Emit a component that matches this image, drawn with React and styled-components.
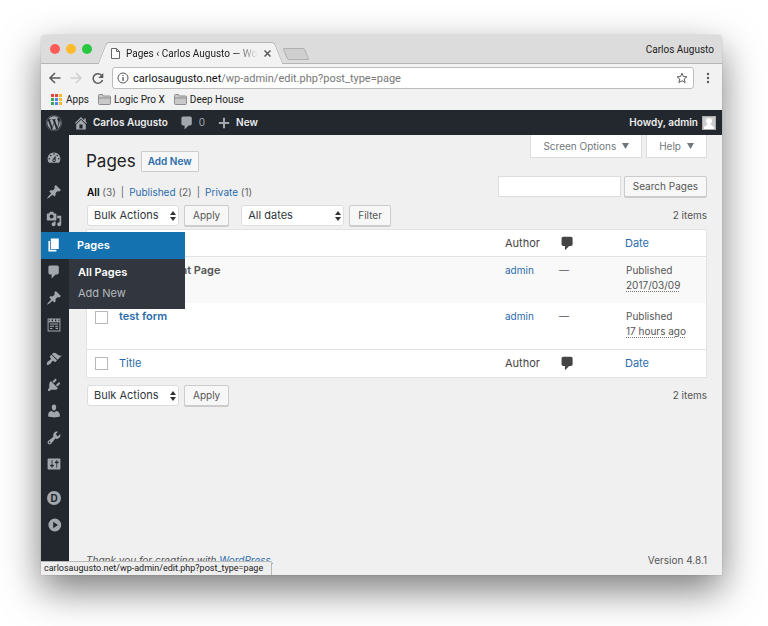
import React, { useState } from 'react';
import styled, { createGlobalStyle, css } from 'styled-components';
import { FaWordpress } from 'react-icons/fa';

const colors = {
  chrome: '#f2f2f2',
  admin: '#23282f',
  submenu: '#32373f',
  blue: '#1472b1',
  link: '#2a6cab',
  icon: '#a2a7ad',
  text: '#444',
  body: '#f0f0f0',
  line: '#e2e2e2',
};

const chromeFont = "Roboto, 'Liberation Sans', sans-serif";

const GlobalStyle = createGlobalStyle`
  * {
    box-sizing: border-box;
  }

  body {
    margin: 0;
    background: #fff;
    color: ${colors.text};
    font: 11px/15px Inter, 'Liberation Sans', sans-serif;
  }

  button, input, select {
    font: inherit;
    color: inherit;
    margin: 0;
  }

  a {
    color: ${colors.link};
    text-decoration: none;
  }
`;

const Desktop = styled.div`
  min-height: 100vh;
  display: flex;
  padding: 35px 46px 51px 41px;
`;

const Shadow = styled.div`
  flex: 1;
  min-width: 0;
  display: flex;
  border-radius: 4px 4px 0 0;
  box-shadow: 0 0 1px rgba(0, 0, 0, 0.4), 0 15px 38px rgba(0, 0, 0, 0.52);
`;

const Window = styled.div`
  position: relative;
  flex: 1;
  min-width: 0;
  display: flex;
  flex-direction: column;
  overflow: hidden;
  border-radius: 4px 4px 0 0;
  background: ${colors.body};
`;

/* Browser chrome */

const TabBar = styled.div`
  height: 29px;
  display: flex;
  align-items: flex-end;
  padding: 0 8px 0 9px;
  background: #dcdcdc;
  border-bottom: 1px solid #b5b5b5;
  font-family: ${chromeFont};
  font-size: 10px;
  color: #222;
`;

const Lights = styled.div`
  display: flex;
  gap: 6px;
  align-self: center;
  margin-right: 10px;
`;

const Light = styled.button`
  width: 10px;
  height: 10px;
  padding: 0;
  border: 0;
  border-radius: 50%;
  background: ${props => props.$color};
`;

const Tab = styled.div`
  position: relative;
  z-index: 1;
  width: 177px;
  height: 22px;
  margin-bottom: -1px;
  display: flex;
  align-items: center;
  gap: 6px;
  padding: 0 8px 0 9px;

  &::before,
  &::after {
    content: '';
    position: absolute;
    z-index: -1;
    top: 0;
    bottom: 0;
    background: ${colors.chrome};
    border-top: 1px solid #b5b5b5;
  }

  &::before {
    left: 0;
    right: 50%;
    border-left: 1px solid #b5b5b5;
    border-top-left-radius: 3px;
    transform: skewX(-22deg);
  }

  &::after {
    left: 45%;
    right: 0;
    border-right: 1px solid #b5b5b5;
    border-top-right-radius: 3px;
    transform: skewX(22deg);
  }
`;

const TabTitle = styled.span`
  flex: 1;
  overflow: hidden;
  white-space: nowrap;
  mask-image: linear-gradient(to right, #000 82%, transparent 100%);
`;

const IconButton = styled.button`
  display: flex;
  align-items: center;
  justify-content: center;
  padding: 0;
  border: 0;
  background: none;
  color: ${props => props.$color || '#5a5a5a'};
`;

const NewTab = styled.button`
  width: 22px;
  height: 12px;
  margin: 0 0 3px 6px;
  padding: 0;
  border: 1px solid #b0b0b0;
  border-radius: 2px;
  background: #cfcfcf;
  transform: skewX(22deg);
`;

const Profile = styled.span`
  margin-left: auto;
  align-self: center;
`;

const Toolbar = styled.div`
  display: flex;
  align-items: center;
  padding: 3px 8px 1px 7px;
  background: ${colors.chrome};
  font-family: ${chromeFont};
`;

const NavButtons = styled.div`
  display: flex;
  gap: 7px;
  margin-right: 7px;
`;

const AddressBar = styled.div`
  flex: 1;
  height: 22px;
  display: flex;
  align-items: center;
  gap: 4px;
  padding: 0 5px 0 4px;
  margin-right: 8px;
  background: #fff;
  border: 1px solid #bdbdbd;
  border-radius: 3px;
  color: #555;
`;

const Url = styled.div`
  flex: 1;
  color: #777;

  strong {
    font-weight: 400;
    color: #111;
  }
`;

const Bookmarks = styled.nav`
  height: 20px;
  display: flex;
  align-items: center;
  gap: 9px;
  padding: 0 10px 1px;
  background: ${colors.chrome};
  font-family: ${chromeFont};
  font-size: 10px;

  a {
    display: flex;
    align-items: center;
    gap: 3px;
    color: #222;
  }
`;

/* WordPress */

const AdminBar = styled.header`
  height: 25px;
  display: flex;
  align-items: center;
  justify-content: space-between;
  padding: 0 6px 0 5px;
  background: ${colors.admin};
  font-size: 10px;
  font-weight: 600;
`;

const BarGroup = styled.div`
  display: flex;
  align-items: center;
  gap: 11px;
`;

const BarLink = styled.a`
  display: flex;
  align-items: center;
  gap: 4px;
  color: #eee;
`;

const BarIcon = styled.span`
  display: flex;
  color: ${colors.icon};
`;

const Muted = styled.span`
  font-weight: 400;
  color: ${colors.icon};
`;

const Avatar = styled.svg`
  background: #ccc;
  border: 1px solid #aaa;
`;

const Main = styled.div`
  flex: 1;
  display: flex;
`;

const Sidebar = styled.nav`
  width: 28px;
  flex: none;
  display: flex;
  flex-direction: column;
  gap: 8px;
  padding: 10px 0 30px;
  background: ${colors.admin};
`;

const MenuGroup = styled.ul`
  list-style: none;
  margin: 0;
  padding: 0;
  display: grid;
  grid-auto-rows: 1fr;
  height: ${props => props.$height}px;
`;

const MenuItem = styled.li`
  position: relative;
  display: flex;
`;

const MenuLink = styled.a`
  flex: none;
  width: 28px;
  display: flex;
  align-items: center;
  padding-left: 5px;
  color: ${colors.icon};

  ${props =>
    props.$open &&
    css`
      position: relative;
      z-index: 3;
      width: 144px;
      gap: 15px;
      background: ${colors.blue};
      color: #fff;
      font-weight: 600;
    `}
`;

const Submenu = styled.ul`
  position: absolute;
  z-index: 3;
  top: 100%;
  left: 28px;
  width: 116px;
  list-style: none;
  margin: 0;
  padding: 3px 0 5px;
  background: ${colors.submenu};

  a {
    display: block;
    padding: 3px 9px;
    color: #b4b9be;
  }

  a[aria-current] {
    color: #fff;
    font-weight: 600;
  }
`;

const LetterBadge = styled.span`
  width: 14px;
  height: 14px;
  margin: 0 1px;
  display: flex;
  align-items: center;
  justify-content: center;
  border-radius: 50%;
  background: ${colors.icon};
  color: ${colors.admin};
  font-size: 10px;
  font-weight: 700;
`;

const Content = styled.main`
  flex: 1;
  min-width: 0;
  display: flex;
  flex-direction: column;
  padding: 0 15px 7px 17px;
`;

const TopRow = styled.div`
  display: flex;
  align-items: flex-start;
  justify-content: space-between;
`;

const Heading = styled.div`
  display: flex;
  align-items: center;
  gap: 5px;
  padding-top: 16px;
`;

const Title = styled.h1`
  margin: 0;
  font-size: 17px;
  line-height: 21px;
  font-weight: 400;
  color: #222;
`;

const AddNew = styled.a`
  padding: 2px 6px;
  border: 1px solid #ccc;
  border-radius: 1px;
  background: #f7f7f7;
  font-weight: 600;
  font-size: 10px;
`;

const ScreenMeta = styled.div`
  display: flex;
  gap: 4px;
`;

const MetaButton = styled.button`
  height: 23px;
  display: flex;
  align-items: center;
  gap: 6px;
  padding: 0 12px;
  border: 1px solid #ddd;
  border-top: 0;
  background: #fff;
  color: #72777c;
  font-size: 10px;
`;

const FilterRow = styled.div`
  display: flex;
  align-items: flex-start;
  justify-content: space-between;
  padding-top: 4px;
`;

const Views = styled.ul`
  list-style: none;
  display: flex;
  gap: 5px;
  margin: 0;
  padding: 9px 0 0 1px;
  font-size: 10px;
  color: #666;

  li + li::before {
    content: '|';
    margin-right: 5px;
  }

  a[aria-current] {
    color: #000;
    font-weight: 600;
  }
`;

const SearchForm = styled.form`
  display: flex;
  gap: 3px;
`;

const SearchInput = styled.input`
  width: 123px;
  height: 21px;
  padding: 0 6px;
  border: 1px solid #ddd;
  background: #fff;
`;

const Button = styled.button`
  height: 21px;
  padding: 0 8px;
  border: 1px solid #ccc;
  border-radius: 2px;
  background: #f7f7f7;
  box-shadow: 0 1px 0 #ccc;
  color: #555;
  font-size: 10px;
  white-space: nowrap;
`;

const TableNav = styled.div`
  display: flex;
  align-items: center;
  gap: 12px;
  padding: ${props => props.$padding};
`;

const Actions = styled.div`
  display: flex;
  gap: 5px;
`;

const SelectBox = styled.span`
  position: relative;
  width: ${props => props.$width}px;

  select {
    display: block;
    width: 100%;
    height: 21px;
    padding: 0 6px;
    appearance: none;
    border: 1px solid #ddd;
    border-radius: 3px;
    background: #fff;
    color: #32373c;
  }

  svg {
    position: absolute;
    right: 3px;
    top: 6px;
    pointer-events: none;
  }
`;

const Count = styled.span`
  margin-left: auto;
  color: #555;
  font-size: 10px;
`;

const Table = styled.table`
  width: 100%;
  table-layout: fixed;
  border-collapse: separate;
  border-spacing: 0;
  border: 1px solid ${colors.line};
  background: #fff;

  th,
  td {
    padding: 0;
    text-align: left;
    vertical-align: top;
    font-weight: 400;
  }

  thead th,
  thead td {
    height: 27px;
    vertical-align: middle;
    border-bottom: 1px solid ${colors.line};
  }

  tfoot th,
  tfoot td {
    height: 28px;
    vertical-align: middle;
    border-top: 1px solid ${colors.line};
  }

  tbody td,
  tbody th {
    height: 46px;
    padding-top: 6px;
    color: #555;
  }

  tbody tr:nth-child(odd) {
    background: #f9f9f9;
  }

  input {
    display: block;
    appearance: none;
    width: 13px;
    height: 13px;
    margin-left: 8px;
    border: 1px solid #b4b9be;
    background: #fff;
  }

  tbody input {
    margin-top: 2px;
  }

  svg {
    display: block;
  }

  strong {
    font-weight: 600;
  }

  abbr {
    text-decoration: underline dotted #777;
    text-underline-offset: 2px;
  }
`;

const SmallCell = styled.td`
  font-size: 10px;
`;

const DateCell = styled(SmallCell)`
  && {
    padding-left: 1px;
  }
`;

const Footer = styled.footer`
  display: flex;
  justify-content: space-between;
  margin-top: auto;
  color: #555;
  font-size: 10px;

  a {
    text-decoration: underline;
    text-underline-offset: 2px;
  }
`;

const StatusBar = styled.div`
  position: absolute;
  z-index: 4;
  left: 0;
  bottom: 0;
  height: 14px;
  padding: 0 8px 0 3px;
  border: solid #b8b8b8;
  border-width: 1px 1px 0 0;
  border-top-right-radius: 2px;
  background: #eee;
  color: #222;
  font-family: ${chromeFont};
  font-size: 9px;
  line-height: 13px;
`;

const icons = {
  dashboard:
    'M3.76 16h12.48c1.1-1.37 1.76-3.11 1.76-5 0-4.42-3.58-8-8-8s-8 3.58-8 8c0 1.89.66 3.63 1.76 5zM10 4c.55 0 1 .45 1 1s-.45 1-1 1-1-.45-1-1 .45-1 1-1zM6 6c.55 0 1 .45 1 1s-.45 1-1 1-1-.45-1-1 .45-1 1-1zm8 0c.55 0 1 .45 1 1s-.45 1-1 1-1-.45-1-1 .45-1 1-1zm-5.37 5.55L12 7v6c0 1.1-.9 2-2 2s-2-.9-2-2c0-.57.24-1.08.63-1.45zM4 10c.55 0 1 .45 1 1s-.45 1-1 1-1-.45-1-1 .45-1 1-1zm12 0c.55 0 1 .45 1 1s-.45 1-1 1-1-.45-1-1 .45-1 1-1zm-5 3c0-.55-.45-1-1-1s-1 .45-1 1 .45 1 1 1 1-.45 1-1z',
  pin: 'M10.44 3.02l1.82-1.82 6.36 6.35-1.83 1.82c-1.05-.68-2.48-.57-3.41.36l-.75.75c-.92.93-1.04 2.35-.35 3.41l-1.83 1.82-2.41-2.41-2.8 2.79c-.42.42-3.38 2.71-3.8 2.29s1.86-3.39 2.28-3.81l2.79-2.79L4.1 9.36l1.83-1.82c1.05.69 2.48.57 3.4-.36l.75-.75c.93-.92 1.05-2.35.36-3.41z',
  media:
    'M13 11V4c0-.55-.45-1-1-1h-1.67L9 1H5L3.67 3H2c-.55 0-1 .45-1 1v7c0 .55.45 1 1 1h10c.55 0 1-.45 1-1zM7 4.5c1.38 0 2.5 1.12 2.5 2.5S8.38 9.5 7 9.5 4.5 8.38 4.5 7 5.62 4.5 7 4.5zM14 6h5v10.5c0 1.38-1.12 2.5-2.5 2.5S14 17.88 14 16.5s1.12-2.5 2.5-2.5c.17 0 .34.02.5.05V9h-3V6zm-4 8.05V13h2v3.5c0 1.38-1.12 2.5-2.5 2.5S7 17.88 7 16.5 8.12 14 9.5 14c.17 0 .34.02.5.05z',
  page: 'M6 15V2h10v13H6zm-1 1h8v2H3V5h2v11z',
  comment: 'M5 2h9c1.1 0 2 .9 2 2v7c0 1.1-.9 2-2 2h-2l-5 5v-5H5c-1.1 0-2-.9-2-2V4c0-1.1.9-2 2-2z',
  form: 'M2 2h16v16H2zM3.2 6.5v10.3h13.6V6.5zM3.2 3.2v2h1.3v-2zM7 3.2v2h1.8v-2zM11.2 3.2v2H13v-2zM15.5 3.2v2h1.3v-2zM5 8.2h10v1.2H5zM5 11h5v1.2H5zM11.5 11H15v1.2h-3.5zM5 13.8h3V15H5zM12 13.3h3V15h-3z',
  appearance:
    'M14.48 11.06L7.41 3.99l1.5-1.5c.5-.56 2.3-.47 3.51.32 1.21.8 1.43 1.28 2.91 2.1 1.18.64 2.45 1.26 4.45.85zm-.71.71L6.7 4.7 4.93 6.47c-.39.39-.39 1.02 0 1.41l1.06 1.06c.39.39.39 1.03 0 1.42-.6.6-1.43 1.11-2.21 1.69-.35.26-.7.53-1.01.84C1.43 14.23.4 16.08 1.4 17.07c.99 1 2.84-.03 4.18-1.36.31-.31.58-.66.85-1.02.57-.78 1.08-1.61 1.69-2.21.39-.39 1.02-.39 1.41 0l1.06 1.06c.39.39 1.02.39 1.41 0z',
  plugins:
    'M13.11 4.36L9.87 7.6 8 5.73l3.24-3.24c.35-.34 1.05-.2 1.56.32.52.51.66 1.21.31 1.55zm-8 1.77l.91-1.12 9.01 9.01-1.19.84c-.71.71-2.63 1.16-3.82 1.16H6.14L4.9 17.26c-.59.59-1.54.59-2.12 0-.59-.58-.59-1.53 0-2.12l1.24-1.24v-3.88c0-1.13.4-3.19 1.09-3.89zm7.26 3.97l3.24-3.24c.34-.35 1.04-.21 1.55.31.52.51.66 1.21.31 1.55l-3.24 3.25z',
  users:
    'M10 9.25c-2.27 0-2.73-3.44-2.73-3.44C7 4.02 7.82 2 9.97 2c2.16 0 2.98 2.02 2.71 3.81 0 0-.41 3.44-2.68 3.44zm0 2.57L12.72 10c2.39 0 4.52 2.33 4.52 4.53v2.49s-3.65 1.13-7.24 1.13c-3.65 0-7.24-1.13-7.24-1.13v-2.49c0-2.25 1.94-4.48 4.47-4.48z',
  tools:
    'M16.68 9.77c-1.34 1.34-3.3 1.67-4.95.99l-5.41 6.52c-.99.99-2.59.99-3.58 0s-.99-2.59 0-3.57l6.52-5.42c-.68-1.65-.35-3.61.99-4.95 1.28-1.28 3.12-1.62 4.72-1.06l-2.89 2.89 2.82 2.82 2.86-2.87c.53 1.58.18 3.39-1.08 4.65zM3.81 16.21c.4.39 1.04.39 1.43 0 .4-.4.4-1.04 0-1.43-.39-.4-1.03-.4-1.43 0-.39.39-.39 1.03 0 1.43z',
  settings:
    'M18 16V4c0-.55-.45-1-1-1H3c-.55 0-1 .45-1 1v12c0 .55.45 1 1 1h14c.55 0 1-.45 1-1zM8 11h1c.55 0 1 .45 1 1s-.45 1-1 1H8v1.5c0 .28-.22.5-.5.5s-.5-.22-.5-.5V13H6c-.55 0-1-.45-1-1s.45-1 1-1h1V5.5c0-.28.22-.5.5-.5s.5.22.5.5V11zm5-2h-1c-.55 0-1-.45-1-1s.45-1 1-1h1V5.5c0-.28.22-.5.5-.5s.5.22.5.5V7h1c.55 0 1 .45 1 1s-.45 1-1 1h-1v5.5c0 .28-.22.5-.5.5s-.5-.22-.5-.5V9z',
  play: 'M11 2a8 8 0 1 0 0 16 8 8 0 0 0 0-16zM9 6l6 4-6 4z',
  home: 'M16 8.5l1.53 1.53-1.06 1.06L10 4.6l-6.47 6.49-1.06-1.06L10 2.5l4 4v-2h2v4zm-6-2.46l6 5.99V18H4v-5.97zM12 17v-5H8v5h4z',
  plus: 'M8.7 3.5h2.6v5.2h5.2v2.6h-5.2v5.2H8.7v-5.2H3.5V8.7h5.2z',
};

const Icon = ({ name, size = 16 }) => (
  <svg width={size} height={size} viewBox="0 0 20 20" fill="currentColor" fillRule="evenodd" aria-hidden="true">
    <path d={icons[name]} />
  </svg>
);

const Caret = () => (
  <svg width="7" height="6" viewBox="0 0 7 6" fill="currentColor" aria-hidden="true">
    <path d="M0 0h7L3.5 6z" />
  </svg>
);

const Folder = () => (
  <svg width="13" height="11" viewBox="0 0 13 11" fill="#c9c9c9" stroke="#8d8d8d" aria-hidden="true">
    <path d="M.5 9.5v-8q0-1 1-1h3l1 1.5h6q1 0 1 1v6.5q0 1-1 1h-10q-1 0-1-1zM.5 4h12" />
  </svg>
);

const appColors = ['#e8453c', '#e8453c', '#f9bb2d', '#3aa757', '#4688f1', '#f9bb2d', '#3aa757', '#4688f1', '#f9bb2d'];

const AppsGrid = () => (
  <svg width="12" height="11" viewBox="0 0 12 11" aria-hidden="true">
    {appColors.map((color, i) => (
      <rect key={i} x={(i % 3) * 4} y={Math.floor(i / 3) * 4} width="3" height="3" fill={color} />
    ))}
  </svg>
);

const menuGroups = [
  { height: 26, items: [{ icon: 'dashboard', label: 'Dashboard' }] },
  {
    height: 159,
    items: [
      { icon: 'pin', label: 'Posts' },
      { icon: 'media', label: 'Media' },
      { icon: 'page', label: 'Pages', open: true },
      { icon: 'comment', label: 'Comments' },
      { icon: 'pin', label: 'Projects' },
      { icon: 'form', label: 'Forms' },
    ],
  },
  {
    height: 131,
    items: [
      { icon: 'appearance', label: 'Appearance' },
      { icon: 'plugins', label: 'Plugins' },
      { icon: 'users', label: 'Users' },
      { icon: 'tools', label: 'Tools' },
      { icon: 'settings', label: 'Settings' },
    ],
  },
  {
    height: 53,
    items: [
      { letter: 'D', label: 'Divi' },
      { icon: 'play', label: 'Collapse menu' },
    ],
  },
];

const pages = [
  { id: 1, title: 'Your Account Page', author: 'admin', date: '2017/03/09' },
  { id: 2, title: 'test form', author: 'admin', date: '17 hours ago', editable: true },
];

const bulkOptions = ['Bulk Actions', 'Edit', 'Move to Trash'];

const Select = ({ label, options, width }) => (
  <SelectBox $width={width}>
    <select aria-label={label}>
      {options.map(option => (
        <option key={option}>{option}</option>
      ))}
    </select>
    <svg width="6" height="10" viewBox="0 0 6 10" fill="#333" aria-hidden="true">
      <path d="M3 0l3 4H0zM3 10L0 6h6z" />
    </svg>
  </SelectBox>
);

const BulkActions = () => (
  <Actions>
    <Select label="Bulk actions" options={bulkOptions} width={92} />
    <Button>Apply</Button>
  </Actions>
);

const BrowserChrome = () => (
  <>
    <TabBar>
      <Lights>
        <Light $color="#fc5b57" aria-label="Close window" />
        <Light $color="#fdbc2e" aria-label="Minimize window" />
        <Light $color="#28c840" aria-label="Zoom window" />
      </Lights>
      <Tab>
        <svg width="9" height="11" viewBox="0 0 9 11" fill="#fff" stroke="#666" aria-hidden="true">
          <path d="M.5.5h5l3 3v7h-8zM5.5.5v3h3" />
        </svg>
        <TabTitle>Pages ‹ Carlos Augusto — WordPress</TabTitle>
        <IconButton aria-label="Close tab">
          <svg width="7" height="7" viewBox="0 0 7 7" stroke="currentColor" strokeWidth="1.5">
            <path d="M.5.5l6 6M6.5.5l-6 6" />
          </svg>
        </IconButton>
      </Tab>
      <NewTab aria-label="New tab" />
      <Profile>Carlos Augusto</Profile>
    </TabBar>
    <Toolbar>
      <NavButtons>
        <IconButton aria-label="Back">
          <svg width="14" height="12" viewBox="0 0 14 12" fill="none" stroke="currentColor" strokeWidth="1.5">
            <path d="M12.5 6h-10M7 1L2 6l5 5" />
          </svg>
        </IconButton>
        <IconButton aria-label="Forward" $color="#cfcfcf">
          <svg width="14" height="12" viewBox="0 0 14 12" fill="none" stroke="currentColor" strokeWidth="1.5">
            <path d="M1.5 6h10M7 1l5 5-5 5" />
          </svg>
        </IconButton>
        <IconButton aria-label="Reload">
          <svg width="15" height="13" viewBox="0 0 15 13" fill="none" stroke="currentColor" strokeWidth="1.5">
            <path d="M12.5 8A4.8 4.8 0 1 1 11.5 3.2" />
            <path d="M13.3 1v5h-5z" fill="currentColor" stroke="none" />
          </svg>
        </IconButton>
      </NavButtons>
      <AddressBar>
        <svg width="12" height="12" viewBox="0 0 12 12" fill="none" stroke="currentColor" aria-hidden="true">
          <circle cx="6" cy="6" r="5" />
          <path d="M6 5v4M6 3v1" strokeWidth="1.3" />
        </svg>
        <Url>
          <strong>carlosaugusto.net</strong>/wp-admin/edit.php?post_type=page
        </Url>
        <IconButton aria-label="Bookmark this page">
          <svg width="12" height="12" viewBox="0 0 12 12" fill="none" stroke="currentColor">
            <path d="M6 1.2l1.4 3.3 3.5.3-2.7 2.3.9 3.5L6 8.7l-3.1 1.9.9-3.5L1.1 4.8l3.5-.3z" />
          </svg>
        </IconButton>
      </AddressBar>
      <IconButton aria-label="Menu">
        <svg width="12" height="12" viewBox="0 0 12 12" fill="currentColor">
          <circle cx="6" cy="2" r="1.2" />
          <circle cx="6" cy="6" r="1.2" />
          <circle cx="6" cy="10" r="1.2" />
        </svg>
      </IconButton>
    </Toolbar>
    <Bookmarks>
      <a href="#apps"><AppsGrid />Apps</a>
      <a href="#logic"><Folder />Logic Pro X</a>
      <a href="#deep-house"><Folder />Deep House</a>
    </Bookmarks>
  </>
);

const Header = () => (
  <AdminBar>
    <BarGroup>
      <BarLink href="#wp" aria-label="About WordPress">
        <BarIcon><FaWordpress size={16} /></BarIcon>
      </BarLink>
      <BarLink href="#site">
        <BarIcon><Icon name="home" /></BarIcon>
        Carlos Augusto
      </BarLink>
      <BarLink href="#comments">
        <BarIcon><Icon name="comment" /></BarIcon>
        <Muted>0</Muted>
      </BarLink>
      <BarLink href="#new">
        <BarIcon><Icon name="plus" /></BarIcon>
        New
      </BarLink>
    </BarGroup>
    <BarLink href="#profile">
      Howdy, admin
      <Avatar width="14" height="14" viewBox="0 0 12 12" fill="#fff" aria-hidden="true">
        <circle cx="6" cy="4" r="3" />
        <path d="M1 12v-2q2-1 3.5-3h3q1.5 2 3.5 3v2z" />
      </Avatar>
    </BarLink>
  </AdminBar>
);

const AdminMenu = () => (
  <Sidebar aria-label="Main menu">
    {menuGroups.map(group => (
      <MenuGroup key={group.items[0].label} $height={group.height}>
        {group.items.map(item => (
          <MenuItem key={item.label}>
            <MenuLink href="#menu" aria-label={item.label} $open={item.open}>
              {item.letter ? <LetterBadge>{item.letter}</LetterBadge> : <Icon name={item.icon} />}
              {item.open && item.label}
            </MenuLink>
            {item.open && (
              <Submenu>
                <li><a href="#all" aria-current="page">All Pages</a></li>
                <li><a href="#new">Add New</a></li>
              </Submenu>
            )}
          </MenuItem>
        ))}
      </MenuGroup>
    ))}
  </Sidebar>
);

const ColumnTitles = ({ checked, onToggle }) => (
  <tr>
    <td>
      <input type="checkbox" aria-label="Select all" checked={checked} onChange={onToggle} />
    </td>
    <th scope="col"><a href="#title">Title</a></th>
    <th scope="col">Author</th>
    <th scope="col" aria-label="Comments"><Icon name="comment" size={17} /></th>
    <th scope="col"><a href="#date">Date</a></th>
  </tr>
);

const PagesTable = () => {
  const [selected, setSelected] = useState([]);
  const allSelected = selected.length === pages.length;

  const toggleAll = () => setSelected(allSelected ? [] : pages.map(page => page.id));
  const toggle = id =>
    setSelected(selected.includes(id) ? selected.filter(s => s !== id) : [...selected, id]);

  return (
    <Table>
      <colgroup>
        <col width="32" />
        <col />
        <col width="54" />
        <col width="66" />
        <col width="81" />
      </colgroup>
      <thead>
        <ColumnTitles checked={allSelected} onToggle={toggleAll} />
      </thead>
      <tbody>
        {pages.map(page => (
          <tr key={page.id}>
            <td>
              <input
                type="checkbox"
                aria-label={`Select ${page.title}`}
                checked={selected.includes(page.id)}
                onChange={() => toggle(page.id)}
              />
            </td>
            <th scope="row">
              <strong>{page.editable ? <a href="#edit">{page.title}</a> : page.title}</strong>
            </th>
            <SmallCell><a href="#author">{page.author}</a></SmallCell>
            <SmallCell>—</SmallCell>
            <DateCell>
              Published
              <br />
              <abbr>{page.date}</abbr>
            </DateCell>
          </tr>
        ))}
      </tbody>
      <tfoot>
        <ColumnTitles checked={allSelected} onToggle={toggleAll} />
      </tfoot>
    </Table>
  );
};

const App = () => (
  <Desktop>
    <GlobalStyle />
    <Shadow>
      <Window>
        <BrowserChrome />
        <Header />
        <Main>
          <AdminMenu />
          <Content>
            <TopRow>
              <Heading>
                <Title>Pages</Title>
                <AddNew href="#add">Add New</AddNew>
              </Heading>
              <ScreenMeta>
                <MetaButton>Screen Options <Caret /></MetaButton>
                <MetaButton>Help <Caret /></MetaButton>
              </ScreenMeta>
            </TopRow>
            <FilterRow>
              <Views>
                <li><a href="#all" aria-current="page">All</a> (3)</li>
                <li><a href="#published">Published</a> (2)</li>
                <li><a href="#private">Private</a> (1)</li>
              </Views>
              <SearchForm onSubmit={e => e.preventDefault()}>
                <SearchInput type="search" aria-label="Search Pages" />
                <Button type="submit">Search Pages</Button>
              </SearchForm>
            </FilterRow>
            <TableNav $padding="5px 0 3px 1px">
              <BulkActions />
              <Actions>
                <Select label="Filter by date" options={['All dates', 'March 2017']} width={103} />
                <Button>Filter</Button>
              </Actions>
              <Count>2 items</Count>
            </TableNav>
            <PagesTable />
            <TableNav $padding="7px 0 0 1px">
              <BulkActions />
              <Count>2 items</Count>
            </TableNav>
            <Footer>
              <em>Thank you for creating with <a href="#wordpress">WordPress</a>.</em>
              <span>Version 4.8.1</span>
            </Footer>
          </Content>
        </Main>
        <StatusBar>carlosaugusto.net/wp-admin/edit.php?post_type=page</StatusBar>
      </Window>
    </Shadow>
  </Desktop>
);

export default App;
